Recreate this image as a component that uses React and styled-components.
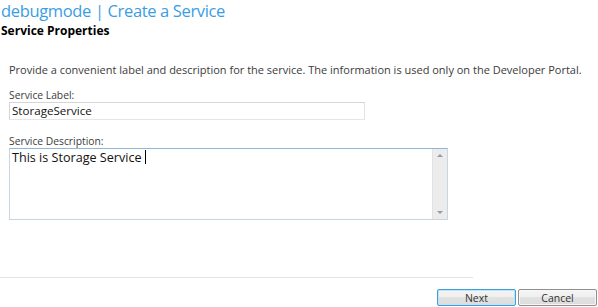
import React from 'react';
import styled, { createGlobalStyle } from 'styled-components';

const GlobalStyle = createGlobalStyle`
  html, body {
    margin: 0;
    padding: 0;
    background: #ffffff;
  }
  body {
    font-family: "Open Sans", "Noto Sans", sans-serif;
  }
`;

const Page = styled.div`
  width: 598px;
  height: 307px;
  display: flex;
  flex-direction: column;
  overflow: hidden;
`;

const Title = styled.h1`
  margin: 0;
  padding: 1px 0 0 1px;
  font-weight: normal;
  font-size: 16.5px;
  line-height: 19px;
  color: #3a9de4;
  letter-spacing: -0.35px;
`;

const SectionHeading = styled.h2`
  margin: 3px 0 0 1px;
  font-size: 12px;
  line-height: 16px;
  font-weight: bold;
  color: #000;
`;

const Body = styled.div`
  padding: 24px 0 0 9px;
  display: flex;
  flex-direction: column;
  flex: 1;
`;

const Intro = styled.p`
  margin: 0 0 12px 0;
  font-size: 11px;
  line-height: 14px;
  color: #3b3b3b;
  white-space: nowrap;
`;

const Field = styled.div`
  display: flex;
  flex-direction: column;
  margin-bottom: ${(p) => p.$gap || 0}px;
`;

const Label = styled.label`
  font-size: 10.3px;
  line-height: 13px;
  color: #3b3b3b;
`;

const TextInput = styled.div`
  box-sizing: border-box;
  width: ${(p) => p.$width}px;
  height: 18px;
  border: 1px solid #d6d6d6;
  border-right-color: #e2e2e2;
  border-bottom-color: #e6e6e6;
  padding: 0 2px;
  font-size: 11.6px;
  line-height: 16px;
  color: #111;
`;

const TextArea = styled.div`
  box-sizing: border-box;
  width: 439px;
  height: 72px;
  border: 1px solid #c8d6e4;
  border-top-color: #8fb7dc;
  display: flex;
`;

const AreaText = styled.div`
  flex: 1;
  padding: 1px 2px;
  font-size: 12.6px;
  line-height: 16px;
  color: #111;
`;

const Caret = styled.span`
  display: inline-block;
  width: 1px;
  height: 14px;
  background: #000;
  margin-left: 3px;
  vertical-align: -2px;
`;

const ScrollBar = styled.div`
  width: 14px;
  background: #ececec;
  border-left: 1px solid #e2e2e2;
  display: flex;
  flex-direction: column;
  justify-content: space-between;
  align-items: center;
  padding: 5px 0;
`;

const Arrow = styled.div`
  width: 0;
  height: 0;
  border-left: 3px solid transparent;
  border-right: 3px solid transparent;
  ${(p) =>
    p.$up
      ? 'border-bottom: 3px solid #9a9a9a;'
      : 'border-top: 3px solid #9a9a9a;'}
`;

const Footer = styled.div`
  margin-top: auto;
  display: flex;
  flex-direction: column;
`;

const Divider = styled.div`
  width: 473px;
  height: 1px;
  background: #e4e4e4;
`;

const ButtonRow = styled.div`
  display: flex;
  justify-content: flex-end;
  gap: 2px;
  padding: 11px 1px 1px 0;
`;

const Button = styled.button`
  box-sizing: border-box;
  width: 79px;
  height: 17px;
  padding: 0;
  font-family: inherit;
  font-size: 10.5px;
  line-height: 14px;
  color: #333;
  border-radius: 2px;
  border: 1px solid ${(p) => (p.$primary ? '#3c9fd5' : '#8f8f8f')};
  background: linear-gradient(#f4f4f4, #f0f0f0 45%, #e2e2e2 50%, #dcdcdc);
  box-shadow: inset 0 0 0 1px ${(p) => (p.$primary ? '#bde6f8' : '#f7f7f7')};
`;

export default function App() {
  return (
    <Page>
      <GlobalStyle />
      <Title>debugmode | Create a Service</Title>
      <SectionHeading>Service Properties</SectionHeading>
      <Body>
        <Intro>
          Provide a convenient label and description for the service. The information is used only on the Developer Portal.
        </Intro>
        <Field $gap={15}>
          <Label>Service Label:</Label>
          <TextInput $width={356}>StorageService</TextInput>
        </Field>
        <Field>
          <Label>Service Description:</Label>
          <TextArea>
            <AreaText>
              This is Storage Service<Caret />
            </AreaText>
            <ScrollBar>
              <Arrow $up />
              <Arrow />
            </ScrollBar>
          </TextArea>
        </Field>
      </Body>
      <Footer>
        <Divider />
        <ButtonRow>
          <Button $primary>Next</Button>
          <Button>Cancel</Button>
        </ButtonRow>
      </Footer>
    </Page>
  );
}
